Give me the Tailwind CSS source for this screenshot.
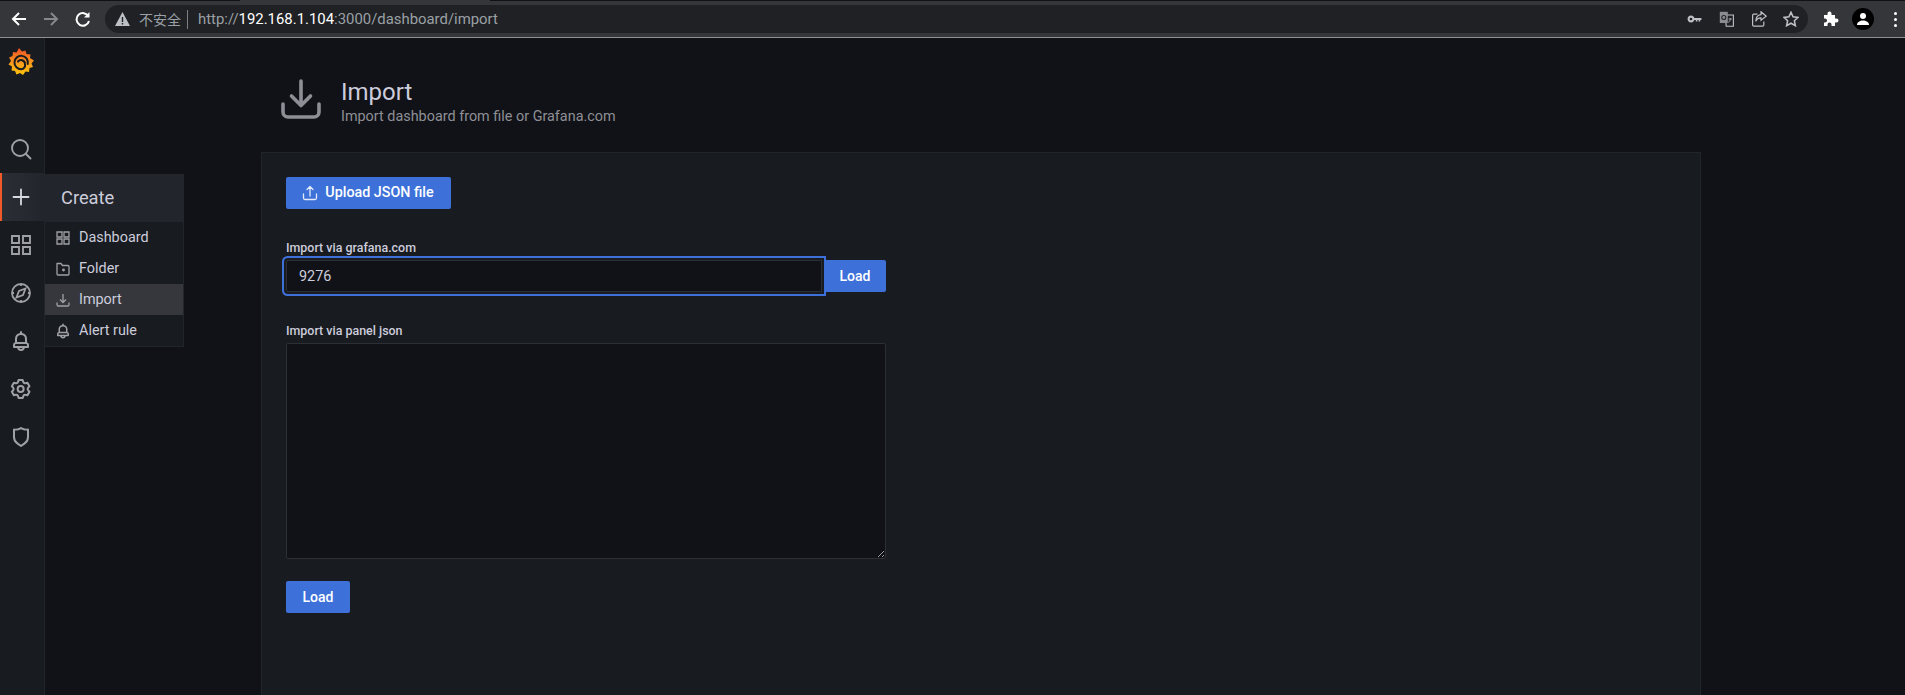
<!DOCTYPE html>
<html lang="en">
<head>
  <meta charset="UTF-8">
  <title>Import - Grafana</title>
  <script src="https://cdn.jsdelivr.net/npm/@tailwindcss/browser@4"></script>
</head>
<body class="h-[695px] overflow-hidden bg-[#111217] font-['Roboto',sans-serif] text-[#ccccdc]">

  <!-- browser toolbar -->
  <div class="flex h-px">
    <div class="w-[240px] bg-[#111]"></div>
    <div class="w-[250px] bg-[#35363a]"></div>
    <div class="flex-1 bg-[#111]"></div>
  </div>
  <div class="h-[37px] flex items-center bg-[#35363a] border-b border-[#8f9091]">
    <div class="flex items-center pl-[11px] w-[105px] text-white">
      <div class="w-[16px] flex justify-center">
        <svg class="w-[16px] h-[16px]" viewBox="0 0 16 16" fill="none" stroke="#fff" stroke-width="2"><path d="M15 8H2M8 2 2 8l6 6"/></svg>
      </div>
      <div class="w-[16px] ml-[16px] flex justify-center">
        <svg class="w-[16px] h-[16px]" viewBox="0 0 16 16" fill="none" stroke="#87888a" stroke-width="2"><path d="M1 8h13M8 2l6 6-6 6"/></svg>
      </div>
      <div class="w-[16px] ml-[16px] flex justify-center">
        <svg class="w-[16px] h-[16px]" viewBox="0 0 16 16" fill="none" stroke="#fff" stroke-width="2"><path d="M13.500 5.500A6.300 6.300 0 1 0 14 10"/><path d="M14.500 1v5.500H9" fill="#fff" stroke="none"/></svg>
      </div>
    </div>
    <div class="w-[1703px] h-[28px] rounded-full bg-[#202124] flex items-center pl-[10px] pr-[9px]">
      <svg class="w-[15px] h-[14px] shrink-0" viewBox="0 0 15 14"><path d="M7.500 0 15 14H0z" fill="#bdc1c6"/><path d="M6.800 5h1.400v5H6.800zM6.800 11h1.400v1.500H6.800z" fill="#202124"/></svg>
      <span class="ml-[9px] text-[14px] text-[#9aa0a6] font-['Noto_Sans_CJK_SC',sans-serif] leading-none">不安全</span>
      <span class="ml-[6px] h-[19px] w-px bg-[#7c7f83]"></span>
      <span class="ml-[10px] text-[14.900px] text-[#9aa0a6] whitespace-nowrap">http://<span class="text-white">192.168.1.104</span>:3000/dashboard/import</span>
      <div class="ml-auto flex items-center gap-[16px]">
        <svg class="w-[16px] h-[16px]" viewBox="0 0 20 20"><circle cx="5" cy="10" r="3" fill="none" stroke="#bdc1c6" stroke-width="2.600"/><path d="M8 8.700h10v2.600h-1.500V13h-2v-1.700H13V13h-2v-1.700H8z" fill="#bdc1c6"/></svg>
        <svg class="w-[16px] h-[16px]" viewBox="0 0 20 20"><path d="M8 5h10v14H9z" fill="none" stroke="#bdc1c6" stroke-width="1.400"/><path d="M1 1h10v14H1z" fill="#8a8d91"/><circle cx="6" cy="8" r="2.500" fill="none" stroke="#202124" stroke-width="1.300"/><path d="M12 10h4M14 9v1.500c0 2-1 3-2.500 3.500" fill="none" stroke="#bdc1c6"/></svg>
        <svg class="w-[16px] h-[16px]" viewBox="0 0 20 20" fill="none" stroke="#bdc1c6" stroke-width="1.500"><path d="M8 4H3.500A1.500 1.500 0 0 0 2 5.500v12A1.500 1.500 0 0 0 3.500 19h11a1.500 1.500 0 0 0 1.500-1.500V13"/><path d="M12.500 1 19 6.500 12.500 11.500V8.500C9 8.500 7 10 6 13c0-5 2.500-8 6.500-8.500z"/></svg>
        <svg class="w-[16px] h-[16px]" viewBox="0 0 20 20" fill="none" stroke="#bdc1c6" stroke-width="1.900"><path d="M10 1.500 12.600 7.300 18.800 8 14.200 12.200 15.500 18.400 10 15.300 4.500 18.400 5.800 12.200 1.200 8 7.400 7.300z"/></svg>
      </div>
    </div>
    <div class="flex items-center ml-[15px]">
      <svg class="w-[16px] h-[16px]" viewBox="0 0 16 16"><path d="M1 4h3.500V2.500a2 2 0 0 1 4 0V4H12v3.500h1.500a2 2 0 0 1 0 4H12V15H8.500v-1.500a2 2 0 0 0-4 0V15H1v-3.500h1a2 2 0 0 0 0-4H1z" fill="#fff"/></svg>
      <div class="ml-[13px] w-[22px] h-[22px] rounded-full bg-black flex items-center justify-center">
        <svg class="w-[14px] h-[14px]" viewBox="0 0 14 14" fill="#fff"><circle cx="7" cy="4" r="3"/><path d="M1 13c0-3 3-4.500 6-4.500s6 1.500 6 4.500z"/></svg>
      </div>
      <div class="ml-[20px] flex flex-col gap-[3px]">
        <span class="w-[3px] h-[3px] rounded-full bg-white"></span>
        <span class="w-[3px] h-[3px] rounded-full bg-white"></span>
        <span class="w-[3px] h-[3px] rounded-full bg-white"></span>
      </div>
    </div>
  </div>

  <div class="relative flex h-[657px]">
    <!-- grafana side menu -->
    <nav class="w-[45px] shrink-0 bg-[#181b1f] border-r border-[#22252b] flex flex-col items-center">
      <div class="h-[87px] w-full flex justify-center pt-[10px] pr-[3px]">
        <svg class="w-[26px] h-[27px]" viewBox="0 0 26 27">
          <defs><linearGradient id="gf" x1="0" y1="1" x2="0" y2="0"><stop offset="0" stop-color="#fcc30b"/><stop offset=".4" stop-color="#f9a01b"/><stop offset="1" stop-color="#ef4f27"/></linearGradient></defs>
          <path d="M11 0 14 3.500 17.500 2.500 18.500 6 22.500 6.500 22 10 26 12.500 23.500 15.500 25 19 21.500 20 21 24 17.500 23.500 15 27 12 25 8.500 26.500 7 23 3.500 22.500 4 18.500 0.500 16.500 3 13 1 9.500 4.500 8 5 4 8.500 4.500z" fill="url(#gf)"/>
          <path d="M19.700 16A6.700 6.700 0 1 0 13.500 21.200C16.500 21 17.500 18 17 15.500A4 4 0 0 0 10 13.500" fill="none" stroke="#181b1f" stroke-width="2" stroke-linecap="round"/>
        </svg>
      </div>
      <div class="h-[48px] w-full flex items-center justify-center pr-[2px]">
        <svg class="w-[22px] h-[22px]" viewBox="0 0 22 22" fill="none" stroke="#a0a1a7" stroke-width="1.900"><circle cx="10" cy="10" r="8"/><path d="m16 16 4.500 4.500" stroke-linecap="round"/></svg>
      </div>
      <div class="h-[48px] w-full flex items-center justify-center border-l-2 border-[#f05a28] bg-gradient-to-r from-[#2b2e34] to-[#22252b] pr-[4px]">
        <svg class="w-[18px] h-[18px]" viewBox="0 0 18 18" stroke="#d8d9de" stroke-width="1.800" stroke-linecap="round"><path d="M9 1.500v15M1.500 9h15"/></svg>
      </div>
      <div class="h-[48px] w-full flex items-center justify-center pr-[2px]">
        <svg class="w-[20px] h-[20px]" viewBox="0 0 20 20" fill="none" stroke="#a0a1a7" stroke-width="1.900"><path d="M1 1h7v7H1zM12 1h7v7h-7zM1 12h7v7H1zM12 12h7v7h-7z"/></svg>
      </div>
      <div class="h-[48px] w-full flex items-center justify-center pr-[2px]">
        <svg class="w-[20px] h-[20px]" viewBox="0 0 20 20" fill="none" stroke="#a0a1a7" stroke-width="1.800"><circle cx="10" cy="10" r="9"/><path d="M14.500 5.500 12 12l-6.500 2.500L8 8z"/><path d="M10 1v2M10 17v2M1 10h2M17 10h2"/></svg>
      </div>
      <div class="h-[48px] w-full flex items-center justify-center pr-[2px]">
        <svg class="w-[24px] h-[24px]" viewBox="0 0 24 24" fill="#a0a1a7"><path d="M18,13.180V10a6,6,0,0,0-5-5.910V3a1,1,0,0,0-2,0V4.090A6,6,0,0,0,6,10v3.180A3,3,0,0,0,4,16v2a1,1,0,0,0,1,1H8.140a4,4,0,0,0,7.720,0H19a1,1,0,0,0,1-1V16A3,3,0,0,0,18,13.180ZM8,10a4,4,0,0,1,8,0v3H8Zm4,10a2,2,0,0,1-1.720-1h3.440A2,2,0,0,1,12,20Zm6-3H6V16a1,1,0,0,1,1-1H17a1,1,0,0,1,1,1Z"/></svg>
      </div>
      <div class="h-[48px] w-full flex items-center justify-center pr-[2px]">
        <svg class="w-[24px] h-[24px]" viewBox="0 0 24 24" fill="#a0a1a7"><path d="M19.900,12.660a1,1,0,0,1,0-1.320L21.180,9.900a1,1,0,0,0,.12-1.170l-2-3.460a1,1,0,0,0-1.070-.48l-1.880.38a1,1,0,0,1-1.150-.66l-.61-1.830A1,1,0,0,0,13.640,2h-4a1,1,0,0,0-1,.68L8.080,4.510a1,1,0,0,1-1.150.66L5,4.790A1,1,0,0,0,4,5.270L2,8.730A1,1,0,0,0,2.100,9.900l1.270,1.440a1,1,0,0,1,0,1.320L2.100,14.100A1,1,0,0,0,2,15.270l2,3.460a1,1,0,0,0,1.070.48l1.880-.38a1,1,0,0,1,1.150.66l.61,1.830a1,1,0,0,0,1,.68h4a1,1,0,0,0,.95-.68l.61-1.830a1,1,0,0,1,1.150-.66l1.880.38a1,1,0,0,0,1.070-.48l2-3.460a1,1,0,0,0-.12-1.170ZM18.410,14l.8.900-1.280,2.220-1.180-.24a3,3,0,0,0-3.450,2L12.920,20H10.360L10,18.860a3,3,0,0,0-3.450-2l-1.180.24L4.070,14.890l.8-.9a3,3,0,0,0,0-4l-.8-.9L5.350,6.890l1.180.24a3,3,0,0,0,3.450-2L10.360,4h2.560l.38,1.140a3,3,0,0,0,3.450,2l1.180-.24,1.280,2.220-.8.900A3,3,0,0,0,18.410,14ZM11.640,8a4,4,0,1,0,4,4A4,4,0,0,0,11.640,8Zm0,6a2,2,0,1,1,2-2A2,2,0,0,1,11.640,14Z"/></svg>
      </div>
      <div class="h-[48px] w-full flex items-center justify-center pr-[2px]">
        <svg class="w-[24px] h-[24px]" viewBox="0 0 24 24" fill="#a0a1a7"><path d="M19.630,3.650a1,1,0,0,0-.84-.2,8,8,0,0,1-6.220-1.270,1,1,0,0,0-1.140,0A8,8,0,0,1,5.210,3.450a1,1,0,0,0-.84.2A1,1,0,0,0,4,4.430v7.450a9,9,0,0,0,3.770,7.330l3.650,2.600a1,1,0,0,0,1.160,0l3.650-2.600A9,9,0,0,0,20,11.880V4.430A1,1,0,0,0,19.630,3.650ZM18,11.880a7,7,0,0,1-2.930,5.700L12,19.770l-3.070-2.190A7,7,0,0,1,6,11.880v-6.300a10,10,0,0,0,6-1.390,10,10,0,0,0,6,1.390Z"/></svg>
      </div>
    </nav>

    <!-- create flyout -->
    <div class="absolute left-[45px] top-[136px] w-[139px] bg-[#181b1f] border-r border-b border-[#22252b] text-[14.400px] text-[#ccccdc]">
      <div class="h-[48px] flex items-center pl-[16px] bg-[#22252b] text-[18.300px]">Create</div>
      <div class="h-[31px] flex items-center pl-[11px] gap-[9px]">
        <svg class="w-[14px] h-[14px]" viewBox="0 0 14 14" fill="none" stroke="#a0a1a7" stroke-width="1.300"><path d="M1 1h5v5H1zM8 1h5v5H8zM1 8h5v5H1zM8 8h5v5H8z"/></svg>
        <span>Dashboard</span>
      </div>
      <div class="h-[31px] flex items-center pl-[11px] gap-[9px]">
        <svg class="w-[14px] h-[14px]" viewBox="0 0 14 14" fill="none" stroke="#a0a1a7" stroke-width="1.300"><path d="M1 1.500h4l1.500 2H12c.6 0 1 .4 1 1V12c0 .6-.4 1-1 1H2c-.6 0-1-.4-1-1z" stroke-linejoin="round"/><circle cx="7.500" cy="8" r=".8" fill="#a0a1a7"/></svg>
        <span>Folder</span>
      </div>
      <div class="h-[31px] flex items-center pl-[11px] gap-[9px] bg-[#35373c]">
        <svg class="w-[14px] h-[14px]" viewBox="0 0 14 14" fill="none" stroke="#a0a1a7" stroke-width="1.300"><path d="M7 1v8M4 6.500 7 9.500l3-3M1 9.500v2.200c0 .7.500 1.300 1.300 1.300h9.400c.8 0 1.300-.6 1.300-1.300V9.500"/></svg>
        <span>Import</span>
      </div>
      <div class="h-[31px] flex items-center pl-[9px] gap-[7px]">
        <svg class="w-[18px] h-[18px]" viewBox="0 0 24 24" fill="#a0a1a7"><path d="M18,13.180V10a6,6,0,0,0-5-5.910V3a1,1,0,0,0-2,0V4.090A6,6,0,0,0,6,10v3.180A3,3,0,0,0,4,16v2a1,1,0,0,0,1,1H8.140a4,4,0,0,0,7.720,0H19a1,1,0,0,0,1-1V16A3,3,0,0,0,18,13.180ZM8,10a4,4,0,0,1,8,0v3H8Zm4,10a2,2,0,0,1-1.720-1h3.440A2,2,0,0,1,12,20Zm6-3H6V16a1,1,0,0,1,1-1H17a1,1,0,0,1,1,1Z"/></svg>
        <span>Alert rule</span>
      </div>
    </div>

    <main class="flex-1 pl-[216px]">
      <!-- page header -->
      <div class="h-[114px] flex items-start pl-[20px] pt-[41px]">
        <svg class="w-[40px] h-[40px] shrink-0" viewBox="0 0 40 40" fill="none" stroke="#8e8f96" stroke-width="3.600" stroke-linecap="round" stroke-linejoin="round"><path d="M20 2v24M10.500 17 20 26.500 29.500 17M2 25v8a5 5 0 0 0 5 5h26a5 5 0 0 0 5-5v-8"/></svg>
        <div class="ml-[20px]">
          <h1 class="text-[24px] leading-[28px] -mt-[1px] text-[#ccccdc]">Import</h1>
          <p class="text-[14.400px] leading-[20px] mt-[1px] text-[#8e8f96]">Import dashboard from file or Grafana.com</p>
        </div>
      </div>

      <!-- import panel -->
      <section class="w-[1440px] h-[544px] bg-[#181b1f] border border-[#22252b] p-[24px]">
        <button class="w-[165px] h-[32px] rounded-[2px] bg-[#3d71d9] text-white text-[14.300px] font-medium flex items-center justify-center gap-[7px] pr-[1px]">
          <svg class="w-[16px] h-[16px]" viewBox="0 0 16 16" fill="none" stroke="#fff" stroke-width="1.300" stroke-linecap="round" stroke-linejoin="round" opacity=".85"><path d="M8 11V1.500M5 4.500l3-3 3 3M1.500 9v4c0 .8.700 1.500 1.500 1.500h10c.8 0 1.500-.7 1.500-1.500V9"/></svg>
          Upload JSON file
        </button>

        <label class="block mt-[30px] mb-[3px] h-[18px] leading-[18px] text-[12.450px] font-medium text-[#ccccdc]">Import via grafana.com</label>
        <div class="flex">
          <input value="9276" class="w-[536px] h-[32px] mr-[4px] bg-[#111217] border border-[#2c2f35] rounded-l-[2px] pl-[12px] text-[14.400px] text-[#ccccdc] outline-none shadow-[0_0_0_2px_#181b1f,0_0_0_4px_#3d71d9]">
          <button class="relative w-[60px] h-[32px] rounded-r-[2px] bg-[#3d71d9] text-white text-[14px] font-medium pr-[2px]">Load</button>
        </div>

        <label class="block mt-[30px] mb-[3px] h-[18px] leading-[18px] text-[12.450px] font-medium text-[#ccccdc]">Import via panel json</label>
        <textarea class="block w-[600px] h-[216px] bg-[#111217] border border-[#2c2f35] rounded-[2px] outline-none"></textarea>

        <button class="block mt-[22px] w-[64px] h-[32px] rounded-[2px] bg-[#3d71d9] text-white text-[14px] font-medium">Load</button>
      </section>
    </main>
  </div>
</body>
</html>
